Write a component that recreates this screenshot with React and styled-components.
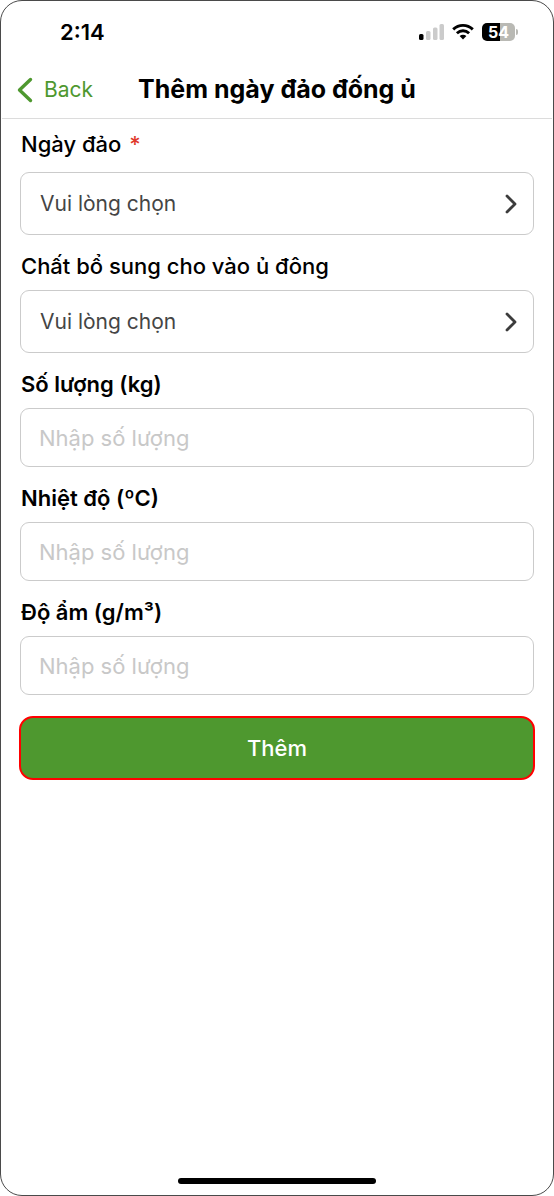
import { useState } from "react"
import styled, { createGlobalStyle } from "styled-components"

const camposTexto = [
    { id: "soLuong", label: "Số lượng (kg)" },
    { id: "nhietDo", label: "Nhiệt độ (ºC)" },
    { id: "doAm", label: "Độ ẩm (g/m³)" },
];

export default function App() {
    const [ngayDao, setNgayDao] = useState("");
    const [chatBoSung, setChatBoSung] = useState("");
    const [valores, setValores] = useState({ soLuong: "", nhietDo: "", doAm: "" });

    return (
        <>
            <GlobalStyle />
            <Tela>
                <BarraStatus>
                    <time>2:14</time>
                    <Indicadores>
                        <Sinal />
                        <Wifi />
                        <Bateria><span>54</span></Bateria>
                    </Indicadores>
                </BarraStatus>
                <Topo>
                    <Voltar type="button">
                        <svg width="16" height="26" viewBox="0 0 16 26" fill="none" stroke="currentColor" strokeWidth="3.4" strokeLinecap="round" strokeLinejoin="round" aria-hidden="true">
                            <path d="M13.5 2.5L2.5 13L13.5 23.5" />
                        </svg>
                        Back
                    </Voltar>
                    <h1>Thêm ngày đảo đống ủ</h1>
                </Topo>
                <Formulario onSubmit={(e) => e.preventDefault()}>
                    <Campo>
                        <Rotulo htmlFor="ngayDao" $obrigatorio>Ngày đảo <b>*</b></Rotulo>
                        <Seletor id="ngayDao" value={ngayDao} onChange={setNgayDao} />
                    </Campo>
                    <Campo>
                        <Rotulo htmlFor="chatBoSung">Chất bổ sung cho vào ủ đông</Rotulo>
                        <Seletor id="chatBoSung" value={chatBoSung} onChange={setChatBoSung} />
                    </Campo>
                    {camposTexto.map((campo) => (
                        <Campo key={campo.id}>
                            <Rotulo htmlFor={campo.id} $forte>{campo.label}</Rotulo>
                            <Entrada
                                id={campo.id}
                                type="text"
                                inputMode="decimal"
                                placeholder="Nhập số lượng"
                                value={valores[campo.id]}
                                onChange={(e) => setValores({ ...valores, [campo.id]: e.target.value })}
                            />
                        </Campo>
                    ))}
                    <Botao type="submit">Thêm</Botao>
                </Formulario>
                <IndicadorHome />
            </Tela>
        </>
    )
}

function Seletor({ id, value, onChange }) {
    return (
        <CaixaSeletor>
            <select id={id} value={value} onChange={(e) => onChange(e.target.value)}>
                <option value="">Vui lòng chọn</option>
            </select>
            <svg width="14" height="20" viewBox="0 0 14 20" fill="none" stroke="#3c3c3c" strokeWidth="2.8" strokeLinecap="round" strokeLinejoin="round" aria-hidden="true">
                <path d="M3 2L11 10L3 18" />
            </svg>
        </CaixaSeletor>
    )
}

function Sinal() {
    return (
        <svg width="26" height="18" viewBox="0 0 26 18" fill="#cbcbcb" aria-hidden="true">
            <rect x="1" y="11" width="4.5" height="6" rx="1.5" fill="#000000" />
            <rect x="8" y="8" width="4.5" height="9" rx="1.5" />
            <rect x="15" y="4.5" width="4.5" height="12.5" rx="1.5" />
            <rect x="21.5" y="1" width="4.5" height="16" rx="1.5" />
        </svg>
    )
}

function Wifi() {
    return (
        <svg width="22" height="18" viewBox="0 0 22 18" fill="none" stroke="#000000" strokeWidth="2.9" aria-hidden="true">
            <path d="M1.2 6.4C6.8 1 15.2 1 20.8 6.4" />
            <path d="M4.9 10.2C8.5 6.9 13.5 6.9 17.1 10.2" />
            <path d="M7.6 13C9.6 11.3 12.4 11.3 14.4 13L11 16.4Z" fill="#000000" stroke="none" />
        </svg>
    )
}

const GlobalStyle = createGlobalStyle`
    * {
        box-sizing: border-box;
    }

    body {
        margin: 0;
        background-color: #FFFFFF;
        font-family: Inter, "Liberation Sans", sans-serif;
    }

    button, input, select {
        font-family: inherit;
    }
`

const Tela = styled.main`
    display: flex;
    flex-direction: column;
    min-height: 100vh;
    padding: 1px;
    border: 1px solid #4A4A4A;
    border-radius: 22px;
    background-color: #FFFFFF;
`

const BarraStatus = styled.div`
    display: flex;
    justify-content: space-between;
    align-items: center;
    height: 60px;
    padding: 0 34px 0 58px;

    time {
        font-size: 22px;
        font-weight: 600;
        line-height: 28px;
    }
`

const Indicadores = styled.div`
    display: flex;
    align-items: center;
    gap: 8px;
`

const Bateria = styled.div`
    display: flex;
    align-items: center;

    span {
        width: 33px;
        height: 18px;
        border-radius: 5px;
        background: linear-gradient(to right, #000000 54%, #B9B9B4 54%);
        color: #FFFFFF;
        font-size: 16px;
        font-weight: 700;
        line-height: 18px;
        text-align: center;
    }

    &::after {
        content: "";
        width: 2px;
        height: 6px;
        margin-left: 1px;
        border-radius: 0 2px 2px 0;
        background-color: #B9B9B4;
    }
`

const Topo = styled.header`
    display: grid;
    grid-template-columns: 1fr auto 1fr;
    align-items: center;
    height: 57px;
    padding: 0 15px;
    border-bottom: 1px solid #DCDCDC;

    h1 {
        margin: 0;
        padding-bottom: 2px;
        font-size: 25px;
        font-weight: 700;
        line-height: 32px;
    }
`

const Voltar = styled.button`
    display: flex;
    align-items: center;
    gap: 11px;
    justify-self: start;
    padding: 0;
    border: 0 none;
    background: none;
    color: #4E982F;
    font-size: 21px;
    line-height: 28px;
`

const Formulario = styled.form`
    display: flex;
    flex-direction: column;
    flex: 1;
    gap: 17px;
    padding: 11px 18px;
`

const Campo = styled.div`
    display: flex;
    flex-direction: column;
    gap: 10px;
`

const Rotulo = styled.label`
    padding: 0 1px ${(props) => props.$obrigatorio ? "4px" : "0"};
    color: #000000;
    font-size: 22px;
    font-weight: ${(props) => props.$forte ? 600 : 500};
    line-height: 28px;

    b {
        margin-left: 2px;
        color: #E03A2B;
        font-weight: 500;
    }
`

const CaixaSeletor = styled.div`
    display: grid;
    align-items: center;

    select, svg {
        grid-area: 1 / 1;
    }

    select {
        width: 100%;
        height: 63px;
        padding: 0 50px 0 19px;
        border: 1px solid #CBCBCB;
        border-radius: 9px;
        outline: none;
        appearance: none;
        background-color: #FFFFFF;
        color: #454545;
        font-size: 21px;
    }

    svg {
        justify-self: end;
        margin-right: 16px;
        pointer-events: none;
    }
`

const Entrada = styled.input`
    width: 100%;
    height: 59px;
    padding: 0 18px;
    border: 1px solid #CBCBCB;
    border-radius: 9px;
    outline: none;
    background-color: #FFFFFF;
    color: #454545;
    font-size: 22px;

    &::placeholder {
        color: #C8C8C8;
        opacity: 1;
    }
`

const Botao = styled.button`
    height: 64px;
    margin: 4px -1px 0;
    border: 2px solid #FF0000;
    border-radius: 14px;
    background-color: #4E982F;
    color: #FFFFFF;
    font-size: 22px;
    font-weight: 500;
    line-height: 28px;
`

const IndicadorHome = styled.div`
    align-self: center;
    width: 36%;
    height: 6px;
    margin-bottom: 10px;
    border-radius: 3px;
    background-color: #000000;
`
